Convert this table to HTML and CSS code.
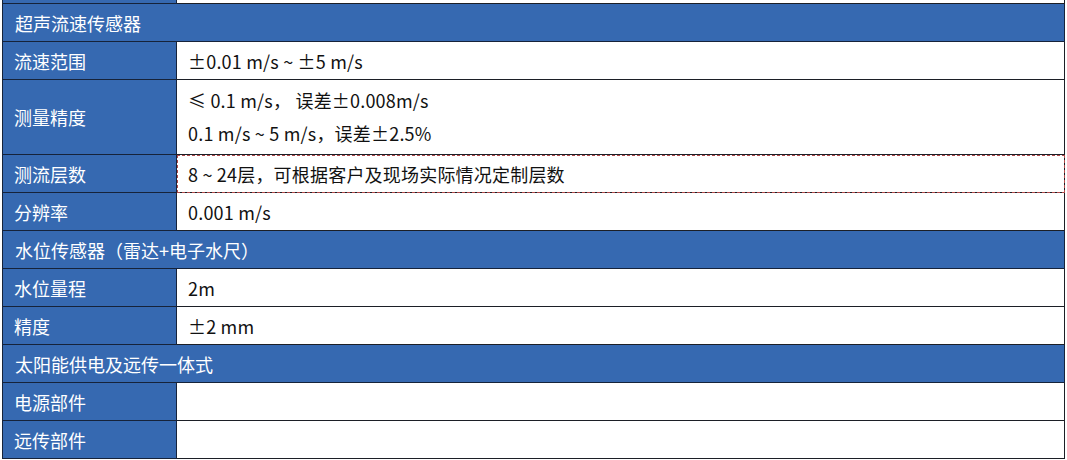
FILE: index.html
```html
<!DOCTYPE html>
<html lang="zh">
<head>
<meta charset="utf-8">
<link rel="stylesheet" href="styles.css">
</head>
<body>
<table class="spec">
  <colgroup><col class="c-label"><col class="c-value"></colgroup>
  <tr class="stub"><td class="label"></td><td class="value"></td></tr>
  <tr class="row"><td class="section" colspan="2">超声流速传感器</td></tr>
  <tr class="row"><td class="label">流速范围</td><td class="value">±0.01 m/s ~ ±5 m/s</td></tr>
  <tr class="row"><td class="label">测量精度</td><td class="value multi"><div>≤ 0.1 m/s， 误差±0.008m/s</div><div>0.1 m/s ~ 5 m/s，误差±2.5%</div></td></tr>
  <tr class="row"><td class="label">测流层数</td><td class="value marked">8 ~ 24层，可根据客户及现场实际情况定制层数</td></tr>
  <tr class="row"><td class="label">分辨率</td><td class="value">0.001 m/s</td></tr>
  <tr class="row"><td class="section" colspan="2">水位传感器（雷达+电子水尺）</td></tr>
  <tr class="row"><td class="label">水位量程</td><td class="value">2m</td></tr>
  <tr class="row"><td class="label">精度</td><td class="value">±2 mm</td></tr>
  <tr class="row"><td class="section" colspan="2">太阳能供电及远传一体式</td></tr>
  <tr class="row"><td class="label">电源部件</td><td class="value"></td></tr>
  <tr class="row"><td class="label">远传部件</td><td class="value"></td></tr>
</table>
</body>
</html>
```
FILE: styles.css
```css
html, body {
  margin: 0;
  padding: 0;
  background: #ffffff;
}
body {
  padding: 0 2px;
  font-family: "Noto Sans CJK SC", "Noto Sans", sans-serif;
  font-size: 18px;
  color: #111;
}
.spec {
  border-collapse: collapse;
  width: 1063px;
  table-layout: fixed;
  margin-top: -1px;
}
.c-label { width: 174px; }
.spec td {
  border: 1px solid #1c1f26;
  padding: 0 0 0 11px;
  line-height: 24px;
  vertical-align: middle;
}
.spec .stub td { height: 3px; padding: 0; }
.spec .row td { height: 37px; }
.spec .label, .spec .section {
  background: #3669b1;
  color: #ffffff;
  border-color: #16233a;
}
.spec .section { padding-left: 12px; }
.spec .value { padding-left: 11px; letter-spacing: 0.2px; }
.spec td.multi { padding-top: 4px; padding-bottom: 4px; }
.spec td.multi div { line-height: 33px; }
.spec td.marked {
  outline: 1px dashed #b04a4a;
  outline-offset: -1px;
}
```
